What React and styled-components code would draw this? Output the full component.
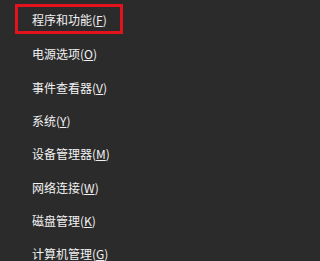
import React from 'react';
import styled, { createGlobalStyle } from 'styled-components';

const GlobalStyle = createGlobalStyle`
  html, body {
    margin: 0;
    padding: 0;
    background: #2b2b2b;
  }
`;

const Menu = styled.div`
  width: 209px;
  height: 261px;
  background: #2b2b2b;
  padding-top: 4px;
  box-sizing: border-box;
  overflow: hidden;
  font-family: "Noto Sans CJK SC", "Noto Sans", sans-serif;
`;

const Item = styled.div`
  display: flex;
  align-items: center;
  height: 33.3px;
  margin-left: 15px;
  width: 108px;
  box-sizing: border-box;
  padding-left: ${({ selected }) => (selected ? 14 : 17)}px;
  border: ${({ selected }) => (selected ? '3px solid #e3121c' : 'none')};
  height: ${({ selected }) => (selected ? 30 : 33.3)}px;
  margin-bottom: ${({ selected }) => (selected ? 3.3 : 0)}px;
  color: #f2f2f2;
  font-size: 12px;
  white-space: nowrap;
`;

const Key = styled.span`
  text-decoration: underline;
  text-underline-offset: 1px;
`;

const items = [
  ['程序和功能', 'F'],
  ['电源选项', 'O'],
  ['事件查看器', 'V'],
  ['系统', 'Y'],
  ['设备管理器', 'M'],
  ['网络连接', 'W'],
  ['磁盘管理', 'K'],
  ['计算机管理', 'G'],
];

export default function App() {
  return (
    <>
      <GlobalStyle />
      <Menu>
        {items.map(([label, key], i) => (
          <Item key={label} selected={i === 0}>
            {label}(<Key>{key}</Key>)
          </Item>
        ))}
      </Menu>
    </>
  );
}
